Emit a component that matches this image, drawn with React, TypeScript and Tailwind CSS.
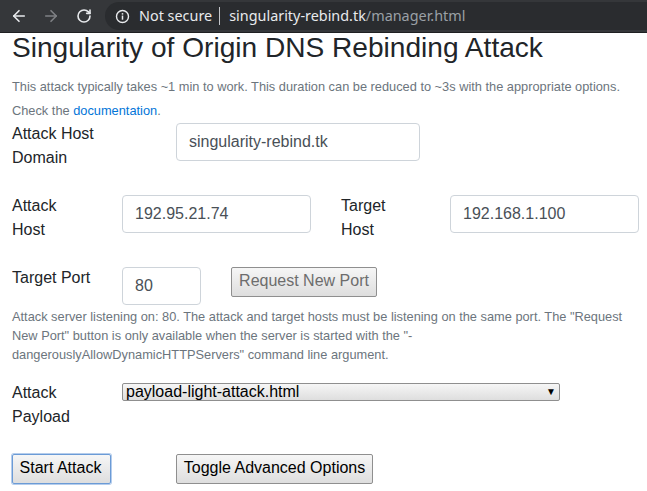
import { ArrowLeft, ArrowRight, RotateCw } from 'lucide-react';

const sans = 'font-["Liberation_Sans",Arial,sans-serif]';
const labelCls = '-mt-px text-[16px] leading-[24px] text-[#212529]';
const inputCls = 'h-[38px] rounded-[4px] border border-[#ced4da] bg-white px-3 text-[16px] text-[#495057] outline-none';
const btnCls = 'rounded-[2px] border bg-gradient-to-b from-[#f6f6f6] to-[#dedede] pb-[2px] text-[16px] leading-none';

// Browser toolbar on top of the page
function Toolbar() {
  return (
    <div className="flex h-[33px] items-center border-b border-[#1f2022] bg-[#35373a] pl-[10px]">
      <ArrowLeft size={18} strokeWidth={2.2} className="text-[#e8eaed]" />
      <ArrowRight size={18} strokeWidth={2.2} className="ml-[14px] text-[#7f8185]" />
      <RotateCw size={16} strokeWidth={2.4} className="ml-[16px] text-[#e8eaed]" />
      <div className="ml-[13px] flex h-[28px] w-[542px] items-center rounded-l-[14px] bg-[#2a2c2f] pl-[10px] font-['Noto_Sans',sans-serif] text-[14.4px] text-[#e8eaed]">
        <svg width="15" height="15" viewBox="0 0 16 16" fill="none" className="shrink-0">
          <circle cx="8" cy="8" r="6.4" stroke="#e8eaed" strokeWidth="1.5" />
          <rect x="7.2" y="7" width="1.6" height="4.4" fill="#e8eaed" />
          <rect x="7.2" y="4.4" width="1.6" height="1.6" fill="#e8eaed" />
        </svg>
        <span className="ml-[9px]">Not secure</span>
        <span className="ml-[7px] h-[18px] w-px bg-[#c4c6ca]" />
        <span className="ml-[9px]">singularity-rebind.tk</span>
        <span className="text-[#9aa0a6]">/manager.html</span>
      </div>
    </div>
  );
}

export default function App() {
  return (
    <div className={`h-[491px] w-[647px] overflow-hidden bg-white ${sans}`}>
      <Toolbar />
      <div className="pl-3">
        <h1 className="h-[42px] text-[28.1px] font-normal leading-[29px] text-[#212529]">
          Singularity of Origin DNS Rebinding Attack
        </h1>
        <p className="text-[12.8px] leading-[24px] text-[#6c757d]">
          This attack typically takes ~1 min to work. This duration can be reduced to ~3s with the appropriate options.
        </p>
        <p className="text-[12.8px] leading-[24px] text-[#6c757d]">
          Check the <a className="text-[#0275d8]">documentation</a>.
        </p>

        <div className="flex h-[72px] items-start">
          <label className={`w-[164px] ${labelCls}`}>
            Attack Host<br />Domain
          </label>
          <input className={`w-[244px] ${inputCls}`} defaultValue="singularity-rebind.tk" />
        </div>

        <div className="flex h-[72px] items-start">
          <label className={`w-[110px] ${labelCls}`}>
            Attack<br />Host
          </label>
          <input className={`w-[189px] ${inputCls}`} defaultValue="192.95.21.74" />
          <label className={`ml-[30px] w-[109px] ${labelCls}`}>
            Target<br />Host
          </label>
          <input className={`w-[189px] ${inputCls}`} defaultValue="192.168.1.100" />
        </div>

        <div className="flex h-[40px] items-start">
          <label className={`w-[110px] ${labelCls}`}>Target Port</label>
          <input className={`w-[79px] ${inputCls}`} defaultValue="80" />
          <button className={`ml-[30px] h-[30px] w-[146px] border-[#8f8f8f] text-[#6d6d6d] ${btnCls}`} disabled>
            Request New Port
          </button>
        </div>

        <p className="w-[625px] text-[12.8px] leading-[19.2px] text-[#6c757d]">
          Attack server listening on: 80. The attack and target hosts must be listening on the same port. The "Request New Port" button is only available when the server is started with the "-dangerouslyAllowDynamicHTTPServers" command line argument.
        </p>

        <div className="mt-[16px] flex h-[73px] items-start">
          <label className="w-[110px] text-[16px] leading-[24px] text-[#212529]">
            Attack<br />Payload
          </label>
          <div className="relative mt-[2px] flex h-[18px] w-[438px] items-center rounded-[2px] border border-[#8f8f8f] bg-gradient-to-b from-[#f6f6f6] to-[#dedede] pl-[3px] pt-px text-[16px] text-black">
            payload-light-attack.html
            <span className="absolute right-[3px] top-0 text-[10px] leading-[16px]">▼</span>
          </div>
        </div>

        <div className="flex items-start">
          <button className={`h-[30px] w-[99px] border-[#6b9bd6] pr-[2px] text-black ring-1 ring-[#b5cdec] ${btnCls}`}>
            Start Attack
          </button>
          <button className={`ml-[65px] h-[30px] w-[197px] whitespace-nowrap border-[#8f8f8f] text-black ${btnCls}`}>
            Toggle Advanced Options
          </button>
        </div>
      </div>
    </div>
  );
}
